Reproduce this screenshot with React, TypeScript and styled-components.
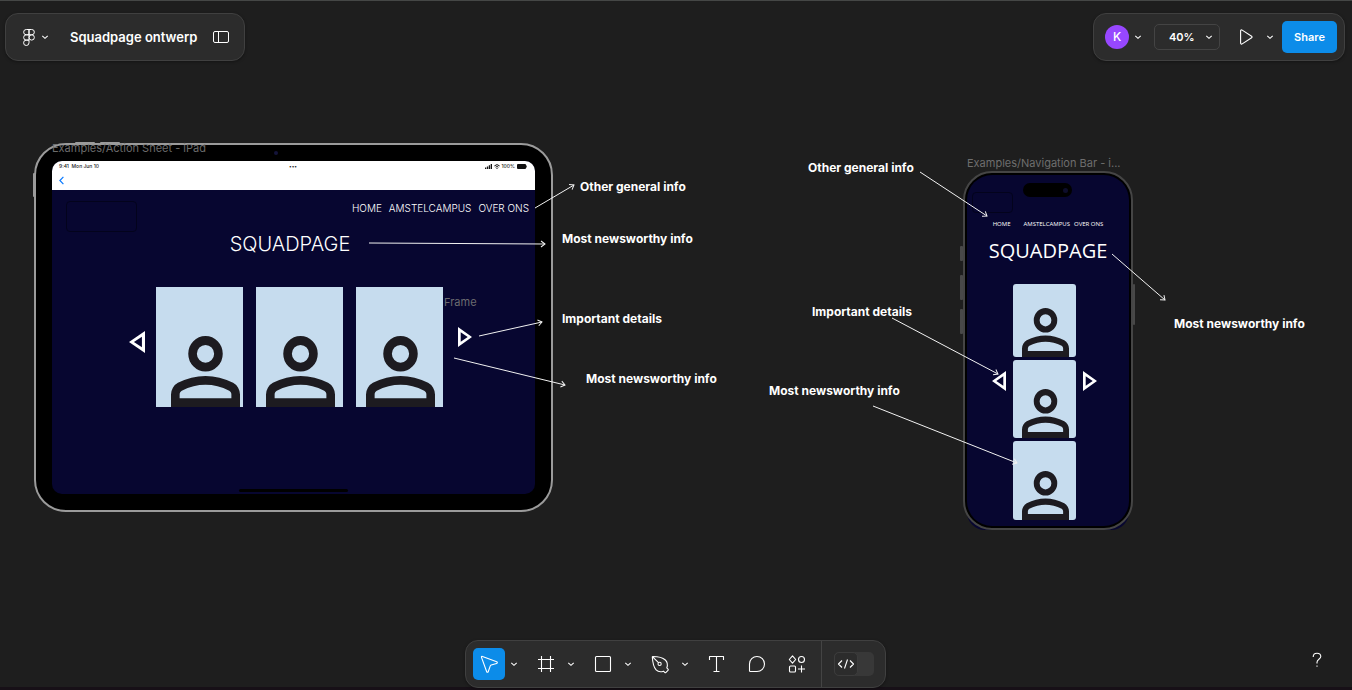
import React from "react";
import styled, { createGlobalStyle } from "styled-components";

const GlobalStyle = createGlobalStyle`
  *, *::before, *::after { box-sizing: border-box; }
  html, body { margin: 0; background: #1e1e1e; }
  body { font-family: Inter, "Liberation Sans", sans-serif; color: #fff; }
  button, select, input { font: inherit; color: inherit; margin: 0; }
  a { color: inherit; text-decoration: none; }
  svg { display: block; flex: none; }
`;

/* ---------- page frame ---------- */

const Page = styled.div`
  position: relative;
  min-height: 100vh;
  display: flex;
  flex-direction: column;
  justify-content: space-between;
  background: #1e1e1e;
  border-top: 1px solid #454746;
  overflow: hidden;
`;

const Header = styled.header`
  position: relative;
  display: flex;
  justify-content: space-between;
  padding: 12px 7px 0 5px;
`;

const Footer = styled.footer`
  position: relative;
  display: grid;
  grid-template-columns: 1fr auto 1fr;
  align-items: center;
  padding: 0 1px 2px 0;
  &::before {
    content: "";
    position: absolute;
    inset: auto 0 0 0;
    height: 3px;
    background: #171017;
  }
`;

const Island = styled.div`
  position: relative;
  display: flex;
  align-items: center;
  height: 48px;
  background: #2c2c2c;
  border: 1px solid #404040;
  border-radius: 13px;
  box-shadow: 0 1px 3px rgba(0, 0, 0, 0.35);
`;

const FileIsland = styled(Island)`
  padding: 0 7px 0 14px;
`;

const ShareIsland = styled(Island)`
  padding: 0 7px 0 11px;
`;

const ToolIsland = styled(Island)`
  grid-column: 2;
  padding-left: 7px;
`;

const PlainButton = styled.button<{ $w: number }>`
  display: flex;
  align-items: center;
  justify-content: center;
  gap: 6px;
  width: ${(p) => p.$w}px;
  height: 32px;
  padding: 0;
  border: 0;
  border-radius: 5px;
  background: transparent;
`;

const FileName = styled.h1`
  margin: 0 0 0 18px;
  padding-right: 8px;
  font-size: 13px;
  line-height: 20px;
  font-weight: 600;
  white-space: nowrap;
`;

const Avatar = styled.button`
  width: 24px;
  height: 24px;
  padding: 0;
  border: 0;
  border-radius: 50%;
  background: #9747ff;
  font-size: 12px;
  line-height: 24px;
  font-weight: 500;
`;

const ZoomBox = styled.label`
  display: flex;
  align-items: center;
  width: 66px;
  height: 26px;
  margin: 0 8px;
  border: 1px solid #444;
  border-radius: 5px;
`;

const ZoomSelect = styled.select`
  appearance: none;
  width: 46px;
  padding: 0 0 0 14px;
  border: 0;
  background: transparent;
  font-size: 11px;
  line-height: 16px;
  font-weight: 600;
  outline: none;
`;

const ShareButton = styled.button`
  width: 55px;
  height: 32px;
  margin-left: 6px;
  padding: 0;
  border: 0;
  border-radius: 5px;
  background: #0c8ce9;
  font-size: 11px;
  line-height: 16px;
  font-weight: 600;
`;

const ToolGroup = styled.div`
  display: flex;
  margin-right: 8px;
`;

const ToolButton = styled.button<{ $active?: boolean }>`
  display: flex;
  align-items: center;
  justify-content: center;
  width: 32px;
  height: 32px;
  padding: 0;
  border: 0;
  border-radius: 5px;
  background: ${(p) => (p.$active ? "#0c8ce9" : "transparent")};
`;

const DevSection = styled.div`
  display: flex;
  align-items: center;
  align-self: stretch;
  padding: 0 11px 0 12px;
  border-left: 1px solid #444;
`;

const DevToggle = styled.label`
  display: flex;
  width: 40px;
  height: 24px;
  border-radius: 5px;
  background: #383838;
`;

const DevKnob = styled.span`
  display: flex;
  align-items: center;
  justify-content: center;
  width: 24px;
  height: 24px;
  border: 1px solid #3c3c3c;
  border-radius: 5px;
  background: #2c2c2c;
`;

const HiddenCheckbox = styled.input`
  appearance: none;
  width: 0;
  height: 0;
`;

const HelpButton = styled.button`
  justify-self: end;
  width: 24px;
  height: 24px;
  margin: 0 22px 8px 0;
  padding: 0;
  border: 0;
  background: transparent;
  display: flex;
  align-items: center;
  justify-content: center;
`;

/* ---------- canvas ---------- */

const Canvas = styled.main`
  position: absolute;
  inset: -1px 0 0 0;
  overflow: hidden;
`;

const Placed = styled.div<{ $x: number; $y: number }>`
  position: absolute;
  left: ${(p) => p.$x}px;
  top: ${(p) => p.$y}px;
`;

const Note = styled(Placed)`
  font-size: 12px;
  line-height: 16px;
  font-weight: 700;
  white-space: nowrap;
`;

const FrameLabel = styled(Placed)`
  font-size: 11px;
  line-height: 16px;
  color: #777;
  opacity: 0.9;
  white-space: nowrap;
`;

const Connectors = styled.svg`
  position: absolute;
  inset: 0;
  width: 100%;
  height: 100%;
  pointer-events: none;
`;

const SideKey = styled(Placed)<{ $w: number; $h: number; $tone: string }>`
  width: ${(p) => p.$w}px;
  height: ${(p) => p.$h}px;
  border-radius: 1px;
  background: ${(p) => p.$tone};
`;

const Lens = styled(Placed)`
  width: 4px;
  height: 4px;
  border-radius: 50%;
  background: #14143a;
`;

/* tablet */

const Tablet = styled(Placed)`
  display: flex;
  width: 519px;
  height: 369px;
  padding: 16px;
  border: 2px solid #9b9b9b;
  border-radius: 32px;
  background: #000;
`;

const TabletScreen = styled.section`
  flex: 1;
  display: flex;
  flex-direction: column;
  border-radius: 10px;
  background: #070630;
  overflow: hidden;
`;

const TabletChrome = styled.div`
  height: 29px;
  padding: 2px 8px 0 7px;
  background: #fff;
  color: #222;
`;

const StatusBar = styled.div`
  display: grid;
  grid-template-columns: 1fr auto 1fr;
  height: 6px;
  font-size: 5px;
  line-height: 6px;
  font-weight: 500;
`;

const StatusRight = styled.span`
  display: flex;
  justify-content: flex-end;
  align-items: center;
  gap: 2px;
`;

const BackLink = styled.a`
  display: flex;
  align-items: center;
  width: 12px;
  height: 12px;
  margin-top: 5px;
`;

const TabletTop = styled.div`
  display: flex;
  justify-content: space-between;
  align-items: flex-start;
  padding: 11px 6px 0 14px;
`;

const LogoSlot = styled.div<{ $w: number; $h: number }>`
  width: ${(p) => p.$w}px;
  height: ${(p) => p.$h}px;
  border: 1px solid #03031c;
  border-radius: 4px;
`;

const TabletNav = styled.nav`
  display: flex;
  gap: 7px;
  font-size: 10px;
  line-height: 14px;
  font-weight: 300;
`;

const TabletTitle = styled.h2`
  margin: 0;
  padding-right: 7px;
  text-align: center;
  font-size: 20px;
  line-height: 24px;
  font-weight: 300;
`;

const TabletCarousel = styled.div`
  display: flex;
  align-items: center;
  justify-content: center;
  margin-top: 31px;
  padding-left: 14px;
`;

const TabletCards = styled.div`
  display: flex;
  gap: 13px;
  margin: 0 15px 0 11px;
`;

const Card = styled.div<{ $w: number; $h: number; $r?: number; $end?: boolean }>`
  display: flex;
  align-items: flex-end;
  justify-content: ${(p) => (p.$end ? "flex-end" : "center")};
  width: ${(p) => p.$w}px;
  height: ${(p) => p.$h}px;
  padding: 0 3px 0 5px;
  border-radius: ${(p) => p.$r ?? 0}px;
  background: #c6dcee;
`;

const StepButton = styled.button<{ $lift: number }>`
  margin: 0 0 ${(p) => p.$lift}px;
  padding: 0;
  border: 0;
  background: transparent;
`;

const HomeBar = styled.div`
  width: 109px;
  height: 3px;
  margin: auto auto 2px;
  border-radius: 2px;
  background: #000;
`;

/* phone */

const PhoneBleed = styled(Placed)`
  width: 162px;
  height: 300px;
  border-radius: 18px;
  background: #070630;
`;

const Phone = styled(Placed)`
  display: flex;
  width: 170px;
  height: 359px;
  border: 2px solid #454545;
  border-radius: 29px;
  background: #000;
  padding: 2px;
`;

const PhoneScreen = styled.section`
  flex: 1;
  display: flex;
  flex-direction: column;
  align-items: center;
  border-radius: 25px;
  background: #070630;
  font-family: "Open Sans", "Noto Sans", sans-serif;
`;

const Notch = styled.div`
  display: flex;
  align-items: center;
  justify-content: flex-end;
  width: 49px;
  height: 14px;
  margin-top: 8px;
  margin-right: 2px;
  padding-right: 4px;
  border-radius: 7px;
  background: #000;
  &::after {
    content: "";
    width: 5px;
    height: 5px;
    border-radius: 50%;
    background: #0d0d2b;
  }
`;

const PhoneNav = styled.nav`
  display: flex;
  margin-top: 23px;
  font-size: 6px;
  line-height: 8px;
`;

const PhoneLink = styled.a<{ $after: number }>`
  margin-right: ${(p) => p.$after}px;
`;

const PhoneTitle = styled.h2`
  margin: 9px 0 0;
  font-size: 20px;
  line-height: 28px;
  font-weight: 400;
`;

const PhoneCarousel = styled.div`
  display: flex;
  align-items: center;
  gap: 7px;
  margin-top: 19px;
  padding-right: 7px;
`;

const PhoneCards = styled.div`
  display: flex;
  flex-direction: column;
  gap: 3px;
`;

/* ---------- drawings ---------- */

const Chevron = () => (
  <svg width="8" height="8" viewBox="0 0 8 8" fill="none" stroke="#fff" strokeWidth="1.100">
    <path d="M1.300 2.800 4 5.300l2.700-2.500" />
  </svg>
);

const Person = ({ w, h }: { w: number; h: number }) => (
  <svg width={w} height={h} viewBox="160 -800 640 640" preserveAspectRatio="none" fill="#1d1b20">
    <path d="M480-480q-66 0-113-47t-47-113q0-66 47-113t113-47q66 0 113 47t47 113q0 66-47 113t-113 47ZM160-160v-112q0-34 17.500-62.500T224-378q62-31 126-46.500T480-440q66 0 130 15.500T736-378q29 15 46.500 43.500T800-272v112H160Zm80-80h480v-32q0-11-5.500-20T700-306q-54-27-109-40.500T480-360q-56 0-111 13.500T260-306q-9 5-14.500 14t-5.500 20v32Zm240-320q33 0 56.500-23.500T560-640q0-33-23.500-56.500T480-720q-33 0-56.500 23.500T400-640q0 33 23.500 56.500T480-560Z" />
  </svg>
);

const Triangle = ({ w, h, left }: { w: number; h: number; left?: boolean }) => (
  <svg width={w} height={h} viewBox="0 0 14 20" preserveAspectRatio="none" fill="#fff" fillRule="evenodd">
    <path
      d={
        left
          ? "M14 0v20L0 10ZM11.300 5.200 4.300 10l7 4.800Z"
          : "M0 0v20L14 10ZM2.700 5.200 9.700 10l-7 4.800Z"
      }
    />
  </svg>
);

const connectors = [
  [535, 208, 574, 185],
  [369, 243, 545, 244],
  [479, 336, 542, 322],
  [454, 358, 565, 385],
  [920, 172, 987, 216],
  [892, 318, 998, 374],
  [873, 406, 1017, 463],
  [1112, 254, 1165, 300],
];

const Arrow = ({ points }: { points: number[] }) => {
  const [x1, y1, x2, y2] = points;
  const angle = (Math.atan2(y2 - y1, x2 - x1) * 180) / Math.PI;
  return (
    <g>
      <path d={`M${x1} ${y1}L${x2} ${y2}`} />
      <path d="M-4-3 0 0l-4 3" transform={`translate(${x2} ${y2}) rotate(${angle})`} />
    </g>
  );
};

const Icon = ({ children, size = 24 }: { children: React.ReactNode; size?: number }) => (
  <svg
    width={size}
    height={size}
    viewBox={`0 0 ${size} ${size}`}
    fill="none"
    stroke="#fff"
    strokeWidth="1.100"
    strokeLinejoin="round"
  >
    {children}
  </svg>
);

const tools = [
  {
    name: "Move",
    active: true,
    menu: true,
    art: <path d="M4.500 5.400c-.3-.8.2-1.300 1-1l14.200 5.400c.9.400.8 1.300-.1 1.600l-5.400 1.700c-.5.200-.8.500-1 1l-2 5.600c-.3.800-1.200.8-1.500 0Z" />,
  },
  { name: "Frame", menu: true, art: <path d="M7.500 4v16M16.500 4v16M4 7.500h16M4 16.500h16" /> },
  { name: "Rectangle", menu: true, art: <rect x="4.500" y="4.500" width="15" height="15" rx="1" /> },
  {
    name: "Pen",
    menu: true,
    art: (
      <>
        <path d="M4.800 4.500c5 0 9.800.9 12.500 3.500 2.300 2.300 2.500 5.200 1.500 7.900l1.200 1.200c.4.400.4.900 0 1.300l-2 2c-.4.400-.9.400-1.300 0L15.500 19.200c-2.700 1-5.300.8-7.400-1.400C5.600 15.200 4.600 9.500 4.300 5c0-.3.200-.5.500-.5ZM4.600 4.800l5.900 5.900" />
        <circle cx="11.600" cy="11.900" r="1.600" />
      </>
    ),
  },
  { name: "Text", menu: false, art: <path d="M4.500 8V4.500h14V8M11.500 4.500v15M8.500 19.500h6" /> },
  { name: "Comment", menu: false, art: <path d="M12 4.500a7.500 7.500 0 1 1 0 15H5.300a.8.800 0 0 1-.8-.8V12A7.500 7.500 0 0 1 12 4.500Z" /> },
  {
    name: "Actions",
    menu: false,
    art: (
      <>
        <path d="m7.500 3.800 3.200 3.700-3.200 3.700-3.200-3.700ZM16.500 13.500v7M13 17h7" />
        <circle cx="16.500" cy="7.500" r="3" />
        <rect x="4.500" y="14" width="6" height="6" rx="1" />
      </>
    ),
  },
];

const notes = [
  { x: 580, y: 179, text: "Other general info" },
  { x: 562, y: 231, text: "Most newsworthy info" },
  { x: 562, y: 311, text: "Important details" },
  { x: 586, y: 371, text: "Most newsworthy info" },
  { x: 808, y: 160, text: "Other general info" },
  { x: 812, y: 304, text: "Important details" },
  { x: 769, y: 383, text: "Most newsworthy info" },
  { x: 1174, y: 316, text: "Most newsworthy info" },
];

const TabletMock = () => (
  <>
    <SideKey $x={75} $y={142} $w={20} $h={3} $tone="#9b9b9b" />
    <SideKey $x={100} $y={142} $w={20} $h={3} $tone="#9b9b9b" />
    <SideKey $x={33} $y={173} $w={3} $h={24} $tone="#9b9b9b" />
    <Tablet $x={34} $y={143}>
      <TabletScreen>
        <TabletChrome>
          <StatusBar>
            <span>9:41&nbsp; Mon Jun 10</span>
            <span>•••</span>
            <StatusRight>
              <svg width="7" height="5" viewBox="0 0 7 5" fill="#111">
                <path d="M0 3.500h1.300V5H0ZM1.900 2.500h1.300V5H1.900ZM3.800 1.300h1.300V5H3.800ZM5.700 0H7v5H5.700Z" />
              </svg>
              <svg width="6" height="5" viewBox="0 0 6 5" fill="none" stroke="#111">
                <path d="M.4 1.900a3.700 3.700 0 0 1 5.200 0M1.600 3.200a2 2 0 0 1 2.800 0M3 4v1" />
              </svg>
              <span>100%</span>
              <svg width="10" height="5" viewBox="0 0 10 5" fill="#111">
                <rect width="9" height="5" rx="1" />
                <rect x="9.300" y="1.500" width=".7" height="2" />
              </svg>
            </StatusRight>
          </StatusBar>
          <BackLink href="#" aria-label="Back">
            <svg width="5" height="9" viewBox="0 0 5 9" fill="none" stroke="#0a7aff" strokeWidth="1.200">
              <path d="M4.400.8.9 4.500l3.500 3.700" />
            </svg>
          </BackLink>
        </TabletChrome>
        <TabletTop>
          <LogoSlot $w={71} $h={31} />
          <TabletNav>
            <a href="#">HOME</a>
            <a href="#">AMSTELCAMPUS</a>
            <a href="#">OVER ONS</a>
          </TabletNav>
        </TabletTop>
        <TabletTitle>SQUADPAGE</TabletTitle>
        <TabletCarousel>
          <StepButton $lift={10} aria-label="Previous">
            <Triangle w={16} h={22} left />
          </StepButton>
          <TabletCards>
            <Card $w={87} $h={120} $end>
              <Person w={69} h={71} />
            </Card>
            <Card $w={87} $h={120}>
              <Person w={69} h={71} />
            </Card>
            <Card $w={87} $h={120}>
              <Person w={69} h={71} />
            </Card>
          </TabletCards>
          <StepButton $lift={20} aria-label="Next">
            <Triangle w={14} h={20} />
          </StepButton>
        </TabletCarousel>
        <HomeBar />
      </TabletScreen>
    </Tablet>
    <Lens $x={274} $y={151} />
    <FrameLabel $x={52} $y={140}>Examples/Action Sheet - iPad</FrameLabel>
    <FrameLabel $x={444} $y={294}>Frame</FrameLabel>
  </>
);

const PhoneMock = () => (
  <>
    <FrameLabel $x={967} $y={155}>Examples/Navigation Bar - i...</FrameLabel>
    <SideKey $x={960} $y={246} $w={3} $h={15} $tone="#484848" />
    <SideKey $x={960} $y={275} $w={3} $h={25} $tone="#484848" />
    <SideKey $x={960} $y={309} $w={3} $h={25} $tone="#484848" />
    <SideKey $x={1133} $y={284} $w={2} $h={41} $tone="#484848" />
    <PhoneBleed $x={967} $y={230} />
    <Phone $x={963} $y={171}>
      <PhoneScreen>
        <Notch />
        <PhoneNav>
          <PhoneLink href="#" $after={13}>HOME</PhoneLink>
          <PhoneLink href="#" $after={4}>AMSTELCAMPUS</PhoneLink>
          <PhoneLink href="#" $after={0}>OVER ONS</PhoneLink>
        </PhoneNav>
        <PhoneTitle>SQUADPAGE</PhoneTitle>
        <PhoneCarousel>
          <StepButton $lift={42} aria-label="Previous">
            <Triangle w={14} h={20} left />
          </StepButton>
          <PhoneCards>
            {[73, 78, 79].map((h) => (
              <Card key={h} $w={63} $h={h} $r={3}>
                <Person w={47} h={49} />
              </Card>
            ))}
          </PhoneCards>
          <StepButton $lift={42} aria-label="Next">
            <Triangle w={14} h={20} />
          </StepButton>
        </PhoneCarousel>
      </PhoneScreen>
    </Phone>
    <Placed $x={972} $y={192}>
      <LogoSlot $w={41} $h={21} />
    </Placed>
  </>
);

export default function App() {
  return (
    <Page>
      <GlobalStyle />
      <Canvas>
        <TabletMock />
        <PhoneMock />
        {notes.map((n) => (
          <Note key={`${n.x}-${n.y}`} $x={n.x} $y={n.y}>
            {n.text}
          </Note>
        ))}
        <Connectors fill="none" stroke="#f2f2f2">
          {connectors.map((c) => (
            <Arrow key={c.join()} points={c} />
          ))}
        </Connectors>
      </Canvas>

      <Header>
        <FileIsland>
          <PlainButton $w={32} aria-label="Main menu">
            <svg width="12" height="17" viewBox="0 0 12 17" fill="none" stroke="#fff">
              <path d="M6 .5H3.300a2.600 2.600 0 0 0 0 5.300H6ZM6 .5h2.700a2.600 2.600 0 0 1 0 5.300H6ZM6 5.800H3.300a2.600 2.600 0 0 0 0 5.300H6ZM6 11.100H3.300A2.700 2.700 0 1 0 6 13.800Z" />
              <circle cx="8.700" cy="8.450" r="2.650" />
            </svg>
            <Chevron />
          </PlainButton>
          <FileName>Squadpage ontwerp</FileName>
          <PlainButton $w={32} aria-label="Toggle panels">
            <svg width="16" height="12" viewBox="0 0 16 12" fill="none" stroke="#fff">
              <rect x=".5" y=".5" width="15" height="11" rx="1.500" />
              <path d="M5.500.5v11" />
            </svg>
          </PlainButton>
        </FileIsland>
        <ShareIsland>
          <Avatar>K</Avatar>
          <PlainButton $w={17} aria-label="Account menu">
            <Chevron />
          </PlainButton>
          <ZoomBox>
            <ZoomSelect aria-label="Zoom" defaultValue="40%">
              <option>40%</option>
              <option>100%</option>
            </ZoomSelect>
            <PlainButton as="span" $w={16}>
              <Chevron />
            </PlainButton>
          </ZoomBox>
          <PlainButton $w={36} aria-label="Present">
            <svg width="13" height="16" viewBox="0 0 13 16" fill="none" stroke="#fff" strokeWidth="1.100" strokeLinejoin="round">
              <path d="M.6 2c0-.9.8-1.400 1.600-.9l9.400 6.100c.6.400.6 1.200 0 1.600l-9.400 6.100C1.400 15.400.6 14.900.6 14Z" />
            </svg>
          </PlainButton>
          <PlainButton $w={12} aria-label="Present options">
            <Chevron />
          </PlainButton>
          <ShareButton>Share</ShareButton>
        </ShareIsland>
      </Header>

      <Footer>
        <ToolIsland role="toolbar" aria-label="Tools">
          {tools.map((t) => (
            <ToolGroup key={t.name}>
              <ToolButton $active={t.active} aria-label={t.name}>
                <Icon>{t.art}</Icon>
              </ToolButton>
              {t.menu && (
                <PlainButton $w={17} aria-label={`${t.name} options`}>
                  <Chevron />
                </PlainButton>
              )}
            </ToolGroup>
          ))}
          <DevSection>
            <DevToggle>
              <HiddenCheckbox type="checkbox" aria-label="Dev Mode" />
              <DevKnob>
                <Icon size={18}>
                  <path d="M5 5.500 1.500 9 5 12.500M13 5.500 16.500 9 13 12.500M10.500 4.500l-3 9" />
                </Icon>
              </DevKnob>
            </DevToggle>
          </DevSection>
        </ToolIsland>
        <HelpButton aria-label="Help">
          <svg width="10" height="16" viewBox="0 0 10 16" fill="none" stroke="#fff" strokeWidth="1.100">
            <path d="M1.200 5C1.200 2.600 2.800 1.200 5 1.200S8.800 2.500 8.800 4.500C8.800 7.200 5 7.400 5 10.200v1.300M5 13.500v1.300" />
          </svg>
        </HelpButton>
      </Footer>
    </Page>
  );
}
